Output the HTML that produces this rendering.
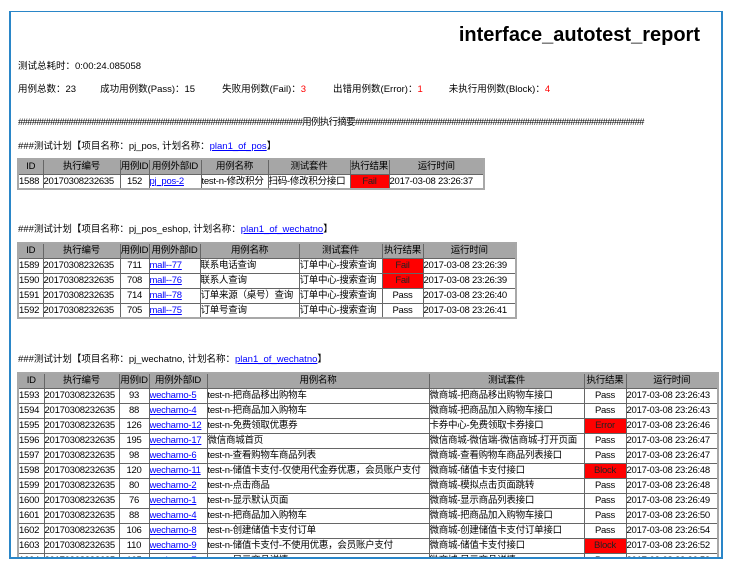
<!DOCTYPE html>
<html><head><meta charset="utf-8"><style>
*{margin:0;padding:0;box-sizing:border-box}
body{width:735px;height:571px;background:#fff;font-family:"Liberation Sans","Noto Sans CJK SC",sans-serif;font-size:9.5px;color:#000;position:relative;overflow:hidden}
#frame{position:absolute;left:9px;top:11px;width:714px;height:548px;border:1px solid #2a86c8;border-width:1px 2px 2px 2px;overflow:hidden}
.a{position:absolute;white-space:nowrap}
h1{position:absolute;right:21px;top:12px;font-size:20px;font-weight:bold;font-family:"Liberation Sans",sans-serif}
.r{color:#f00}
a{color:#00f;text-decoration:underline}
table{position:absolute;border-collapse:collapse;border:2px solid #a8a8a8;table-layout:fixed;font-size:9.5px;letter-spacing:-0.25px}
td,th{border:1px solid #666;height:15px;padding:0;white-space:nowrap;overflow:hidden;font-weight:normal;line-height:13px}
th{background:#a6a6a6;text-align:center}
td.c{text-align:center}
td.red{background:#f00;text-align:center;color:#222}
</style></head><body>
<div id="frame">
<h1>interface_autotest_report</h1>
<div class="a" style="left:7px;top:46px">测试总耗时：0:00:24.085058</div>
<div class="a" style="left:7px;top:69px">用例总数：23<span style="margin-left:24px">成功用例数(Pass)：15</span><span style="margin-left:27px">失败用例数(Fail)：<span class="r">3</span></span><span style="margin-left:27px">出错用例数(Error)：<span class="r">1</span></span><span style="margin-left:26px">未执行用例数(Block)：<span class="r">4</span></span></div>
<div class="a" style="left:7px;top:102px;letter-spacing:-0.7px">##############################################################用例执行摘要###############################################################</div>
<div class="a" style="left:7px;top:126px">###测试计划【项目名称：pj_pos, 计划名称：<a>plan1_of_pos</a>】</div>
<table style="left:6px;top:146px;width:466px">
<colgroup><col style="width:25px"><col style="width:77px"><col style="width:29px"><col style="width:52px"><col style="width:67px"><col style="width:82px"><col style="width:39px"><col style="width:95px"></colgroup>
<tr><th>ID</th><th>执行编号</th><th>用例ID</th><th>用例外部ID</th><th>用例名称</th><th>测试套件</th><th>执行结果</th><th>运行时间</th></tr>
<tr><td>1588</td><td>20170308232635</td><td class="c">152</td><td><a>pj_pos-2</a></td><td>test-n-修改积分</td><td>扫码-修改积分接口</td><td class="red">Fail</td><td>2017-03-08 23:26:37</td></tr>
</table>
<div class="a" style="left:7px;top:209px">###测试计划【项目名称：pj_pos_eshop, 计划名称：<a>plan1_of_wechatno</a>】</div>
<table style="left:6px;top:230px;width:498px">
<colgroup><col style="width:25px"><col style="width:77px"><col style="width:29px"><col style="width:51px"><col style="width:99px"><col style="width:83px"><col style="width:41px"><col style="width:93px"></colgroup>
<tr><th>ID</th><th>执行编号</th><th>用例ID</th><th>用例外部ID</th><th>用例名称</th><th>测试套件</th><th>执行结果</th><th>运行时间</th></tr>
<tr><td>1589</td><td>20170308232635</td><td class="c">711</td><td><a>mall--77</a></td><td>联系电话查询</td><td>订单中心-搜索查询</td><td class="red">Fail</td><td>2017-03-08 23:26:39</td></tr>
<tr><td>1590</td><td>20170308232635</td><td class="c">708</td><td><a>mall--76</a></td><td>联系人查询</td><td>订单中心-搜索查询</td><td class="red">Fail</td><td>2017-03-08 23:26:39</td></tr>
<tr><td>1591</td><td>20170308232635</td><td class="c">714</td><td><a>mall--78</a></td><td>订单来源（桌号）查询</td><td>订单中心-搜索查询</td><td class="c">Pass</td><td>2017-03-08 23:26:40</td></tr>
<tr><td>1592</td><td>20170308232635</td><td class="c">705</td><td><a>mall--75</a></td><td>订单号查询</td><td>订单中心-搜索查询</td><td class="c">Pass</td><td>2017-03-08 23:26:41</td></tr>
</table>
<div class="a" style="left:7px;top:339px">###测试计划【项目名称：pj_wechatno, 计划名称：<a>plan1_of_wechatno</a>】</div>
<table style="left:6px;top:360px;width:700px">
<colgroup><col style="width:26px"><col style="width:75px"><col style="width:30px"><col style="width:58px"><col style="width:222px"><col style="width:155px"><col style="width:42px"><col style="width:92px"></colgroup>
<tr><th>ID</th><th>执行编号</th><th>用例ID</th><th>用例外部ID</th><th>用例名称</th><th>测试套件</th><th>执行结果</th><th>运行时间</th></tr>
<tr><td>1593</td><td>20170308232635</td><td class="c">93</td><td><a>wechamo-5</a></td><td>test-n-把商品移出购物车</td><td>微商城-把商品移出购物车接口</td><td class="c">Pass</td><td>2017-03-08 23:26:43</td></tr>
<tr><td>1594</td><td>20170308232635</td><td class="c">88</td><td><a>wechamo-4</a></td><td>test-n-把商品加入购物车</td><td>微商城-把商品加入购物车接口</td><td class="c">Pass</td><td>2017-03-08 23:26:43</td></tr>
<tr><td>1595</td><td>20170308232635</td><td class="c">126</td><td><a>wechamo-12</a></td><td>test-n-免费领取优惠券</td><td>卡券中心-免费领取卡券接口</td><td class="red">Error</td><td>2017-03-08 23:26:46</td></tr>
<tr><td>1596</td><td>20170308232635</td><td class="c">195</td><td><a>wechamo-17</a></td><td>微信商城首页</td><td>微信商城-微信端-微信商城-打开页面</td><td class="c">Pass</td><td>2017-03-08 23:26:47</td></tr>
<tr><td>1597</td><td>20170308232635</td><td class="c">98</td><td><a>wechamo-6</a></td><td>test-n-查看购物车商品列表</td><td>微商城-查看购物车商品列表接口</td><td class="c">Pass</td><td>2017-03-08 23:26:47</td></tr>
<tr><td>1598</td><td>20170308232635</td><td class="c">120</td><td><a>wechamo-11</a></td><td>test-n-储值卡支付-仅使用代金券优惠，会员账户支付</td><td>微商城-储值卡支付接口</td><td class="red">Block</td><td>2017-03-08 23:26:48</td></tr>
<tr><td>1599</td><td>20170308232635</td><td class="c">80</td><td><a>wechamo-2</a></td><td>test-n-点击商品</td><td>微商城-模拟点击页面跳转</td><td class="c">Pass</td><td>2017-03-08 23:26:48</td></tr>
<tr><td>1600</td><td>20170308232635</td><td class="c">76</td><td><a>wechamo-1</a></td><td>test-n-显示默认页面</td><td>微商城-显示商品列表接口</td><td class="c">Pass</td><td>2017-03-08 23:26:49</td></tr>
<tr><td>1601</td><td>20170308232635</td><td class="c">88</td><td><a>wechamo-4</a></td><td>test-n-把商品加入购物车</td><td>微商城-把商品加入购物车接口</td><td class="c">Pass</td><td>2017-03-08 23:26:50</td></tr>
<tr><td>1602</td><td>20170308232635</td><td class="c">106</td><td><a>wechamo-8</a></td><td>test-n-创建储值卡支付订单</td><td>微商城-创建储值卡支付订单接口</td><td class="c">Pass</td><td>2017-03-08 23:26:54</td></tr>
<tr><td>1603</td><td>20170308232635</td><td class="c">110</td><td><a>wechamo-9</a></td><td>test-n-储值卡支付-不使用优惠，会员账户支付</td><td>微商城-储值卡支付接口</td><td class="red">Block</td><td>2017-03-08 23:26:52</td></tr>
<tr><td>1604</td><td>20170308232635</td><td class="c">105</td><td><a>wechamo-7</a></td><td>test-n-显示商品详情</td><td>微商城-显示商品详情</td><td class="c">Pass</td><td>2017-03-08 23:26:53</td></tr>
</table>
</div>
</body></html>
